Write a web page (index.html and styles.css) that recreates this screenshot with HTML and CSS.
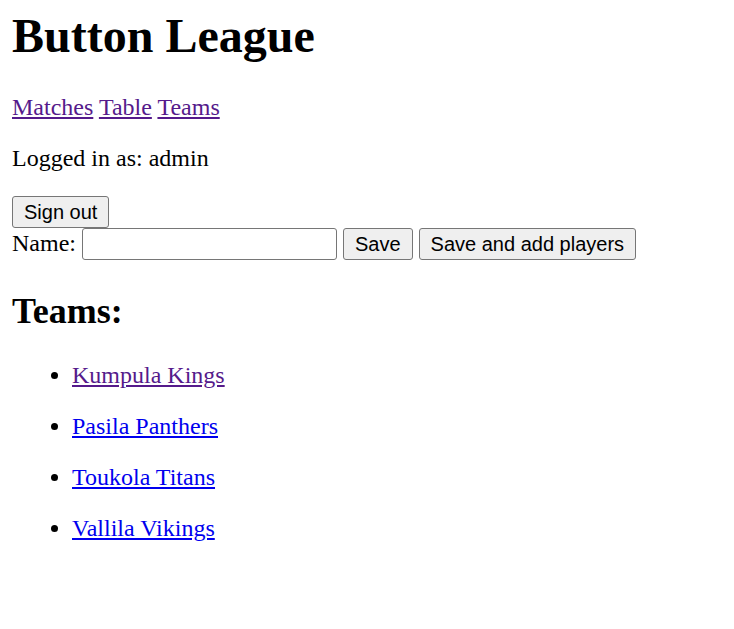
FILE: index.html
```html
<!DOCTYPE html>
<html>
<head>
<meta charset="utf-8">
<title>Button League</title>
<link rel="stylesheet" href="styles.css">
</head>
<body>
<h1 class="title">Button League</h1>
<p class="nav"><a class="link visited" href="#">Matches</a> <a class="link visited" href="#">Table</a> <a class="link visited" href="#">Teams</a></p>
<p class="text">Logged in as: admin</p>
<form class="signout"><button class="btn" type="button">Sign out</button></form>
<form class="team-form">Name: <input class="field" type="text"> <button class="btn" type="button">Save</button> <button class="btn" type="button">Save and add players</button></form>
<h2 class="subtitle">Teams:</h2>
<ul class="teams">
<li><p class="item"><a class="link visited" href="#">Kumpula Kings</a></p></li>
<li><p class="item"><a class="link" href="#">Pasila Panthers</a></p></li>
<li><p class="item"><a class="link" href="#">Toukola Titans</a></p></li>
<li><p class="item"><a class="link" href="#">Vallila Vikings</a></p></li>
</ul>
</body>
</html>
```
FILE: styles.css
```css
html { background: #fff; }
body {
  margin: 8px 12px;
  font-family: "Liberation Serif", "Times New Roman", serif;
  font-size: 24px;
  color: #000;
}
.title {
  font-size: 48px;
  font-weight: bold;
  margin: 0 0 31px;
}
.nav, .text { margin: 24px 0; }
.link { color: #0000ee; text-decoration: underline; }
.link.visited { color: #551a8b; }
.signout, .team-form { margin: 0; }
.btn {
  font-family: "Liberation Sans", Arial, sans-serif;
  font-size: 20px;
  height: 32px;
  box-sizing: border-box;
  padding: 0 11px;
  margin: 0;
  background: #efefef;
  border: 1px solid #767676;
  border-radius: 3px;
  color: #000;
  vertical-align: baseline;
}
.field {
  width: 255px;
  height: 32px;
  box-sizing: border-box;
  border: 1px solid #767676;
  border-radius: 3px;
  margin: 0;
  padding: 1px 3px;
  font-size: 20px;
  font-family: "Liberation Sans", Arial, sans-serif;
  background: #fff;
}
.subtitle {
  font-size: 36px;
  font-weight: bold;
  margin: 30px 0;
}
.teams {
  margin: 24px 0;
  padding-left: 60px;
  list-style: disc;
}
.item { margin: 24px 0; }
```
